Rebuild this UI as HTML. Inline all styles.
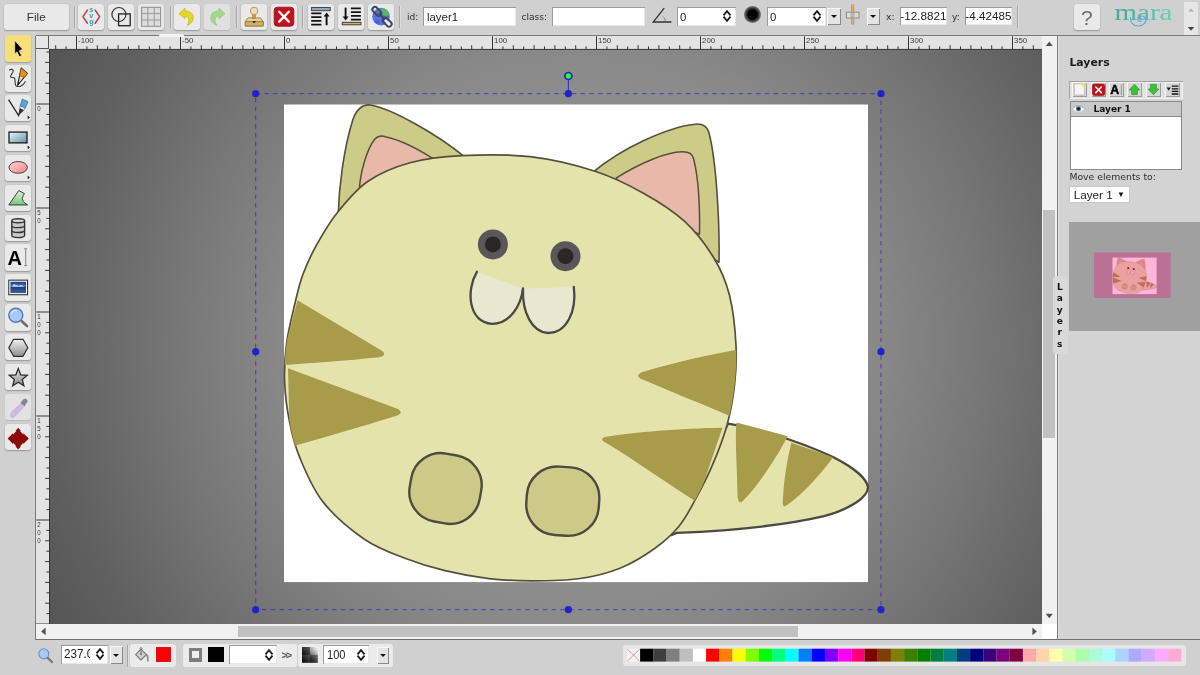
<!DOCTYPE html>
<html lang="en"><head><meta charset="utf-8"><title>mara - vector editor</title>
<style>
html,body{margin:0;padding:0}
body{will-change:transform;width:1200px;height:675px;overflow:hidden;background:#d0d0d0;position:relative;font-family:"Liberation Sans",sans-serif;color:#333}
.a{position:absolute}
.btn{position:absolute;background:#e9e9e9;border-radius:3px;box-shadow:0 1px 1.5px rgba(0,0,0,.28),0 0 0 .5px rgba(0,0,0,.04)}
.btn svg{position:absolute;left:0;top:0}
.sep{position:absolute;width:1px;background:#a8a8a8;box-shadow:1px 0 0 #dedede}
.lbl{position:absolute;font-family:"DejaVu Sans","Liberation Sans",sans-serif;font-size:9.1px;color:#2e2e2e;white-space:nowrap;line-height:12px}
.inp{position:absolute;background:#fff;box-shadow:inset 1px 1px 0 #9a9a9a, inset -1px -1px 0 #e8e8e8;overflow:hidden;font-size:11.4px;line-height:14px;color:#222;white-space:nowrap}
.inp span{position:absolute;top:3px}
.dd{position:absolute;background:#e4e4e4;box-shadow:inset 1px 1px 0 #f8f8f8, inset -1px -1px 0 #8a8a8a}
.dd:after{content:"";position:absolute;left:50%;top:50%;margin:-1.5px 0 0 -3.2px;border:3.2px solid transparent;border-top:3.6px solid #111;border-bottom:0}
svg{display:block}
</style></head><body>
<!-- top toolbar -->
<div class="btn" style="left:4px;top:4px;width:64.5px;height:26px;text-align:center;font-size:11.7px;line-height:26px;color:#333">File</div>
<div class="sep" style="left:73.5px;top:6px;height:22px"></div>
<div class="btn" style="left:78px;top:4px;width:26px;height:26px;"><svg width="26" height="26" viewBox="0 0 26 26"><path d="M9.4 6.1 L5 12.6 L9.4 19.2 M17.2 6.1 L21.6 12.6 L17.2 19.2" fill="none" stroke="#b8404f" stroke-width="1.6" stroke-linecap="round" stroke-linejoin="round"/><g font-family="Liberation Sans,sans-serif" font-weight="bold" font-size="7.4" fill="#35a6a6" text-anchor="middle"><text x="13.4" y="8.2">s</text><text x="13.4" y="14.1">v</text><text x="13.4" y="19.6">g</text></g></svg></div>
<div class="btn" style="left:108px;top:4px;width:26px;height:26px;"><svg width="26" height="26" viewBox="0 0 26 26"><circle cx="10.9" cy="10.5" r="7" fill="none" stroke="#333" stroke-width="1.2"/><rect x="10.6" y="9.9" width="11.6" height="11.8" fill="none" stroke="#222" stroke-width="1.3"/></svg></div>
<div class="btn" style="left:138px;top:4px;width:26px;height:26px;"><svg width="26" height="26" viewBox="0 0 26 26"><rect x="3.6" y="3.3" width="19" height="19" fill="#dcdcdc" stroke="#8e8e8e" stroke-width="1"/><path d="M9.9 3.3V22.3M16.3 3.3V22.3M3.6 9.6H22.6M3.6 16H22.6" stroke="#9a9a9a" stroke-width="1" fill="none"/></svg></div>
<div class="sep" style="left:169.5px;top:6px;height:22px"></div>
<div class="btn" style="left:174px;top:4px;width:26px;height:26px;"><svg width="26" height="26" viewBox="0 0 26 26"><path transform="translate(13 13.2) scale(.93) translate(-13 -13)" d="M4.4 9.2 L10.8 3.4 L10.8 6.3 C16.5 6.2 20.2 9.6 19.8 14 C19.5 17.5 17 20.4 13.2 21.8 C15.2 18.6 15.6 15.6 14.6 13.8 C13.8 12.4 12.4 12 10.8 12.1 L10.8 14.6 Z" fill="#e4d726" stroke="#c4b51a" stroke-width=".8" stroke-linejoin="round"/></svg></div>
<div class="btn" style="left:204px;top:4px;width:26px;height:26px;background:#e0e0e0;box-shadow:0 1px 1px rgba(0,0,0,.14)"><svg width="26" height="26" viewBox="0 0 26 26"><g opacity=".62"><path transform="translate(13 13.2) scale(.93) translate(-13 -13)" d="M21.6 9.2 L15.2 3.4 L15.2 6.3 C9.5 6.2 5.8 9.6 6.2 14 C6.5 17.5 9 20.4 12.8 21.8 C10.8 18.6 10.4 15.6 11.4 13.8 C12.2 12.4 13.6 12 15.2 12.1 L15.2 14.6 Z" fill="#7ed35f" stroke="#63bb47" stroke-width=".8" stroke-linejoin="round"/></g></svg></div>
<div class="sep" style="left:235.5px;top:6px;height:22px"></div>
<div class="btn" style="left:241px;top:4px;width:26px;height:26px;"><svg width="26" height="26" viewBox="0 0 26 26"><path d="M4.3 17.5 L7 13.9 H19.5 L22.2 17.5 V22 H4.3Z" fill="#e7cf98" stroke="#9b7b3e" stroke-width=".9" stroke-linejoin="round"/><path d="M4.3 17.5 H22.2 V22 H4.3Z" fill="#cfae66" stroke="#9b7b3e" stroke-width=".9"/><rect x="11.6" y="9.6" width="3" height="4.6" fill="#e0923a" stroke="#a86a25" stroke-width=".5"/><circle cx="13.1" cy="6.9" r="3.7" fill="#f0dcb0" stroke="#b0905a" stroke-width=".9"/><path d="M11.2 17.2 H15 L13.1 19.2Z" fill="#111"/></svg></div>
<div class="btn" style="left:271px;top:4px;width:26px;height:26px;"><svg width="26" height="26" viewBox="0 0 26 26"><rect x="3.2" y="3.2" width="19.6" height="19" rx="3.2" fill="#c4121c" stroke="#8e0a12" stroke-width=".8"/><path d="M8.2 7.8 L17.8 17.6 M17.8 7.8 L8.2 17.6" stroke="#fff" stroke-width="2.3" stroke-linecap="round"/></svg></div>
<div class="sep" style="left:302px;top:6px;height:22px"></div>
<div class="btn" style="left:308px;top:4px;width:26px;height:26px;"><svg width="26" height="26" viewBox="0 0 26 26"><rect x="3.6" y="3.5" width="18.6" height="3.2" fill="#8ea9b8" stroke="#2a3a44" stroke-width=".9"/><path d="M3.2 9.4H13.4M3.2 13.2H13.4M3.2 16.9H13.4M3.2 20.7H13.4" stroke="#111" stroke-width="1.8"/><path d="M18.6 21.2V11.5" stroke="#111" stroke-width="1.9"/><path d="M15.6 12.4 L18.6 8.4 L21.6 12.4Z" fill="#111"/></svg></div>
<div class="btn" style="left:337.5px;top:4px;width:26px;height:26px;"><svg width="26" height="26" viewBox="0 0 26 26"><rect x="4.3" y="18.3" width="18.6" height="2.5" fill="#c9b56e" stroke="#3a3320" stroke-width=".9"/><path d="M12.9 4.4H22.9M12.9 8.2H22.9M12.9 11.9H22.9M12.9 15.6H22.9" stroke="#111" stroke-width="1.8"/><path d="M7.6 3.6V13.4" stroke="#111" stroke-width="1.9"/><path d="M4.6 12.5 L7.6 16.6 L10.6 12.5Z" fill="#111"/></svg></div>
<div class="btn" style="left:367.5px;top:4px;width:26px;height:26px;"><svg width="26" height="26" viewBox="0 0 26 26"><circle cx="13" cy="12.6" r="8.8" fill="#5c6fe0"/><path d="M13 4.4 C17 3.6 21 6.5 21.6 10.6 C19.5 12.6 16 12.4 14.4 10.2 C13 8.4 12 6 13 4.4Z" fill="#59b85e"/><path d="M6 17 C8 15.5 11 16 12 18 C11 20 8 21 6 17Z" fill="#4a5ed0"/><g fill="none" stroke="#3c4a58" stroke-width="2"><rect x="-5.2" y="-2.6" width="10.4" height="5.2" rx="2.6" transform="translate(8.8 7.4) rotate(45)"/><rect x="-5.2" y="-2.6" width="10.4" height="5.2" rx="2.6" transform="translate(19.2 18.2) rotate(45)"/></g><path d="M11 9.6 L17 15.8" stroke="#3c4a58" stroke-width="2.2"/><rect x="-3.4" y="-1.2" width="6.8" height="2.4" rx="1.2" transform="translate(19.2 18.2) rotate(45)" fill="#e8e8f8"/></svg></div>
<div class="sep" style="left:399px;top:6px;height:22px"></div>
<div class="lbl" style="left:407px;top:11.3px">id:</div>
<div class="inp" style="left:422.5px;top:6.5px;width:93.5px;height:19px"><span style="left:4.5px">layer1</span></div>
<div class="lbl" style="left:521.5px;top:11.3px">class:</div>
<div class="inp" style="left:552px;top:6.5px;width:93px;height:19px"></div>
<svg class="a" style="left:651px;top:6px" width="22" height="18" viewBox="0 0 22 18"><path d="M13.2 2.2 L2.2 16 H20.4" fill="none" stroke="#333" stroke-width="1.3"/><path d="M12 10.4 C13.6 11.8 14.4 13.8 14.4 16" fill="none" stroke="#555" stroke-width=".6"/></svg>
<div class="inp" style="left:676.5px;top:6.5px;width:59px;height:19px"><span style="left:3.4px">0</span></div><svg class="a" style="left:722px;top:9px" width="10" height="14" viewBox="0 0 10 14"><path d="M1.5 6.3 L5 2.1 L8.5 6.3 M1.5 7.7 L5 11.9 L8.5 7.7" fill="none" stroke="#1c1c1c" stroke-width="1.8"/></svg>
<div class="a" style="left:744px;top:5.7px;width:17px;height:17px;border-radius:50%;background:radial-gradient(circle,#000 0,#000 38%,rgba(0,0,0,.55) 62%,rgba(0,0,0,0) 100%)"></div>
<div class="inp" style="left:766.5px;top:6.5px;width:59px;height:19px"><span style="left:3.4px">0</span></div><svg class="a" style="left:812px;top:9px" width="10" height="14" viewBox="0 0 10 14"><path d="M1.5 6.3 L5 2.1 L8.5 6.3 M1.5 7.7 L5 11.9 L8.5 7.7" fill="none" stroke="#1c1c1c" stroke-width="1.8"/></svg>
<div class="dd" style="left:827px;top:7.7px;width:13.5px;height:17px"></div>
<svg class="a" style="left:844px;top:3px" width="18" height="24" viewBox="0 0 18 24"><rect x="2.4" y="9.2" width="12.6" height="5.8" fill="#dcdcdc" stroke="#8a8a8a" stroke-width="1"/><path d="M7.7 1.2V21.8M9.5 1.2V21.8" stroke="#e8922e" stroke-width="1.3"/><rect x="6.4" y="10.8" width="4.2" height="2.6" fill="#b7b7b7"/></svg>
<div class="dd" style="left:867px;top:7.7px;width:13px;height:17px"></div>
<div class="lbl" style="left:886px;top:11.3px">x:</div>
<div class="inp" style="left:899.5px;top:6.5px;width:47px;height:18px"><span style="left:.8px;top:2.6px;font-size:11.7px">-12.8821</span></div>
<div class="lbl" style="left:952px;top:11.3px">y:</div>
<div class="inp" style="left:964.5px;top:6.5px;width:47px;height:18px"><span style="left:.8px;top:2.6px;font-size:11.7px">-4.42485</span></div>
<div class="sep" style="left:1017px;top:6px;height:22px"></div>
<div class="btn" style="left:1073.5px;top:3.5px;width:26.5px;height:26.5px;text-align:center;font-size:21px;line-height:27px;color:#6c6c6c">?</div>
<svg class="a" style="left:1108px;top:0" width="72" height="34" viewBox="0 0 72 34"><defs><linearGradient id="mg" x1="0" x2="1" y1="0" y2="0"><stop offset="0" stop-color="#49aa90"/><stop offset=".5" stop-color="#52b8ae"/><stop offset="1" stop-color="#66d6b4"/></linearGradient></defs><text x="6.5" y="20.2" font-family="Liberation Serif,serif" font-size="24" fill="url(#mg)" textLength="58" lengthAdjust="spacingAndGlyphs">mara</text><path d="M22.4 17.6 C22.6 22.6 25.4 26.2 30.6 26 C36 25.8 39.4 21.4 37.2 17.8 C35.4 15 30.2 15.6 29.8 18.8 C29.6 21 31.8 22 33.4 21" fill="none" stroke="#5aa9df" stroke-width="1.1" stroke-linecap="round"/></svg>
<div class="a" style="left:1183.5px;top:2px;width:14px;height:34px;background:#e6e6e6"></div>
<svg class="a" style="left:1183.5px;top:2px" width="14" height="34" viewBox="0 0 14 34"><path d="M4.2 9.6 L7 6.4 L9.8 9.6Z" fill="#b0b0b0"/><path d="M3.8 25 L7 28.8 L10.2 25Z" fill="#444"/></svg>
<!-- left tools -->
<div class="btn" style="left:4.6px;top:35.4px;width:26.6px;height:26.3px;background:#f6df7a;box-shadow:0 1px 1.5px rgba(0,0,0,.25)"><svg width="26.6" height="26.3" viewBox="0 0 26.6 26.3"><g transform="translate(0 0.1)"><path d="M9.8 5.6 L9.8 18.6 L12.1 16.7 L14.3 21.5 L16.5 20.5 L14.2 15.8 L17.5 14.1 Z" fill="#000" stroke="#fdf6d0" stroke-width=".5"/></g></svg></div>
<div class="btn" style="left:4.6px;top:65.27px;width:26.6px;height:26.3px;"><svg width="26.6" height="26.3" viewBox="0 0 26.6 26.3"><g transform="translate(0 0.23)"><path d="M4.6 4.8 C6 3.6 8 4 8.2 5.4 C8.4 7.4 5 10.4 5.6 11.8 C6.2 13 8.4 11.6 9.4 12.6 C11 14.4 9 18.6 11.2 20.6 C13.4 22.4 18.4 20.6 20.2 16.4" fill="none" stroke="#333" stroke-width="1.1" stroke-linecap="round"/><path d="M12.6 20 L16.2 2.8 L22.4 8.2 Z" fill="#f6e3b4" stroke="#222" stroke-width="1.1" stroke-linejoin="round"/><path d="M16.2 2.8 L22.4 8.2 L19.4 12.2 L14.6 10.4Z" fill="#e8901c" stroke="#7a4a10" stroke-width=".6"/><path d="M12.6 20 L13.3 16.6 L15 18 Z" fill="#111"/></g></svg></div>
<div class="btn" style="left:4.6px;top:95.14px;width:26.6px;height:26.3px;"><svg width="26.6" height="26.3" viewBox="0 0 26.6 26.3"><g transform="translate(0 0.36)"><path d="M3.6 4.2 L13.6 20.2 L17 9" fill="none" stroke="#222" stroke-width="1.3" stroke-linejoin="miter"/><path d="M17.4 3.6 L23 6.4 L20.2 13 L15.2 10.6Z" fill="#5aa6d6" stroke="#2a6a9a" stroke-width=".7"/><path d="M15.2 10.6 L20.2 13 L19 15 L14.6 12.8Z" fill="#f4f4f4" stroke="#555" stroke-width=".5"/><path d="M14.6 12.8 L19 15 L13.8 20 Z" fill="#333"/></g><path d="M22.7 20.6 L25 22.4 L22.7 24.2Z" fill="#222"/></svg></div>
<div class="btn" style="left:4.6px;top:125.01px;width:26.6px;height:26.3px;"><svg width="26.6" height="26.3" viewBox="0 0 26.6 26.3"><g transform="translate(0 0.49)"><defs><linearGradient id="gr" x1="0" y1="0" x2="1" y2="1"><stop offset="0" stop-color="#eef5f8"/><stop offset="1" stop-color="#5f93ab"/></linearGradient></defs><rect x="4" y="6.6" width="18" height="10.8" fill="url(#gr)" stroke="#1a1a1a" stroke-width="1.3"/></g><path d="M22.7 20.6 L25 22.4 L22.7 24.2Z" fill="#222"/></svg></div>
<div class="btn" style="left:4.6px;top:154.88px;width:26.6px;height:26.3px;"><svg width="26.6" height="26.3" viewBox="0 0 26.6 26.3"><g transform="translate(0 0.62)"><defs><linearGradient id="ge" x1="0" y1="0" x2="1" y2="1"><stop offset="0" stop-color="#ffd6d6"/><stop offset="1" stop-color="#f57f86"/></linearGradient></defs><ellipse cx="13.2" cy="11.8" rx="9.2" ry="5.9" fill="url(#ge)" stroke="#4a3a3a" stroke-width="1"/></g><path d="M22.7 20.6 L25 22.4 L22.7 24.2Z" fill="#222"/></svg></div>
<div class="btn" style="left:4.6px;top:184.75px;width:26.6px;height:26.3px;"><svg width="26.6" height="26.3" viewBox="0 0 26.6 26.3"><g transform="translate(0 0.75)"><defs><linearGradient id="gp" x1="0" y1="0" x2="0" y2="1"><stop offset="0" stop-color="#dff0df"/><stop offset="1" stop-color="#72c878"/></linearGradient></defs><path d="M3.8 19.2 L13.8 4.8 L19.4 7.8 C17.6 10.6 17 12.6 17.6 14.2 C18.4 16.2 20.4 17.8 22.6 19.2 Z" fill="url(#gp)" stroke="#3c3c3c" stroke-width="1" stroke-linejoin="round"/></g></svg></div>
<div class="btn" style="left:4.6px;top:214.62px;width:26.6px;height:26.3px;"><svg width="26.6" height="26.3" viewBox="0 0 26.6 26.3"><g transform="translate(0 0.88)"><path d="M6.8 4.8 V19.6 C6.8 22.4 19.6 22.4 19.6 19.6 V4.8" fill="#c9c9c9" stroke="#333" stroke-width="1.4"/><ellipse cx="13.2" cy="4.8" rx="6.4" ry="2" fill="#d4d4d4" stroke="#333" stroke-width="1.4"/><path d="M6.8 9.8 C6.8 12.4 19.6 12.4 19.6 9.8 M6.8 14.7 C6.8 17.3 19.6 17.3 19.6 14.7" fill="none" stroke="#333" stroke-width="1.4"/></g></svg></div>
<div class="btn" style="left:4.6px;top:244.49px;width:26.6px;height:26.3px;"><svg width="26.6" height="26.3" viewBox="0 0 26.6 26.3"><g transform="translate(0 1.01)"><text x="2.6" y="19.8" font-family="Liberation Sans,sans-serif" font-weight="bold" font-size="20" fill="#000">A</text><path d="M20.7 3.8V20.6M19.2 3.8H22.2M19.2 20.6H22.2" stroke="#888" stroke-width="1" fill="none"/></g></svg></div>
<div class="btn" style="left:4.6px;top:274.36px;width:26.6px;height:26.3px;"><svg width="26.6" height="26.3" viewBox="0 0 26.6 26.3"><g transform="translate(0 1.14)"><defs><linearGradient id="gi" x1="0" y1="0" x2="0" y2="1"><stop offset="0" stop-color="#1c3f86"/><stop offset=".45" stop-color="#4a78c4"/><stop offset=".5" stop-color="#22407e"/><stop offset="1" stop-color="#3d5f9e"/></linearGradient></defs><rect x="3.8" y="5" width="18.8" height="14.6" fill="#fff" stroke="#222" stroke-width="1"/><rect x="5.4" y="6.6" width="15.6" height="11.4" fill="url(#gi)"/><path d="M7.4 10.6 C8 8.6 10.2 8.6 10.8 10 C12 9.4 13.2 10 13.4 11 C15 9.6 17 9.6 18.4 10.8 L18.4 11.6 L7.4 11.6Z" fill="#cfe0f6" opacity=".9"/></g></svg></div>
<div class="btn" style="left:4.6px;top:304.23px;width:26.6px;height:26.3px;"><svg width="26.6" height="26.3" viewBox="0 0 26.6 26.3"><g transform="translate(0 1.27)"><path d="M16.6 15.8 L22 20.8" stroke="#6e6e6e" stroke-width="2.6" stroke-linecap="round"/><circle cx="10.8" cy="10" r="7" fill="#a9c9fb" stroke="#5578bd" stroke-width="1.4"/><path d="M6.2 9 C6.6 6.4 9 4.8 11.4 5.2" fill="none" stroke="#d6e6ff" stroke-width="1.2" stroke-linecap="round"/></g></svg></div>
<div class="btn" style="left:4.6px;top:334.1px;width:26.6px;height:26.3px;"><svg width="26.6" height="26.3" viewBox="0 0 26.6 26.3"><g transform="translate(0 1.4)"><defs><linearGradient id="gh" x1="0" y1="0" x2="0" y2="1"><stop offset="0" stop-color="#f2f2f2"/><stop offset="1" stop-color="#8f8f8f"/></linearGradient></defs><path d="M3.8 12.4 L8.6 3.9 L18 3.9 L22.8 12.4 L18 20.9 L8.6 20.9Z" fill="url(#gh)" stroke="#2c2c2c" stroke-width="1.2" stroke-linejoin="round"/></g></svg></div>
<div class="btn" style="left:4.6px;top:363.97px;width:26.6px;height:26.3px;"><svg width="26.6" height="26.3" viewBox="0 0 26.6 26.3"><g transform="translate(0 1.53)"><defs><linearGradient id="gs" x1="0" y1="0" x2="0" y2="1"><stop offset="0" stop-color="#e6e6e6"/><stop offset="1" stop-color="#8a8a8a"/></linearGradient></defs><path d="M13.3 3.1 L15.7 9.3 L22.3 9.7 L17.2 13.9 L18.9 20.3 L13.3 16.7 L7.7 20.3 L9.4 13.9 L4.3 9.7 L10.9 9.3Z" fill="url(#gs)" stroke="#2c2c2c" stroke-width="1.3" stroke-linejoin="miter"/></g></svg></div>
<div class="btn" style="left:4.6px;top:393.84px;width:26.6px;height:26.3px;background:#e2e2e2;box-shadow:0 1px 1px rgba(0,0,0,.12)"><svg width="26.6" height="26.3" viewBox="0 0 26.6 26.3"><g transform="translate(0 1.66)"><g opacity=".8"><path d="M5.6 20.4 C5 17.6 8 14 17 7.4 L19.6 10 C13 17.6 10 21.4 7.4 22 C6.4 22.2 5.8 21.4 5.6 20.4Z" fill="#c6b2e2" stroke="#b29ad2" stroke-width=".6"/><path d="M15.4 7.4 L18 4 C19.4 2.6 21.6 3 22.4 4.6 C23 6 22.2 7.2 21 8 L19.8 10.6Z" fill="#6c6c78"/></g></g></svg></div>
<div class="btn" style="left:4.6px;top:423.71px;width:26.6px;height:26.3px;"><svg width="26.6" height="26.3" viewBox="0 0 26.6 26.3"><g transform="translate(0 1.79)"><path d="M13.2 2 L16 5.2 H15 L18.4 8.6 V7.4 L23.8 12.8 L18.4 18.2 V17 L15 20.4 H16 L13.2 23.6 L10.4 20.4 H11.4 L8 17 V18.2 L2.6 12.8 L8 7.4 V8.6 L11.4 5.2 H10.4Z" fill="#8c0a0a"/></g></svg></div>
<!-- rulers -->
<div class="a" style="left:35.5px;top:35.3px;width:1164.5px;height:1px;background:#7a7a7a"></div>
<div class="a" style="left:35.3px;top:35.5px;width:1px;height:604px;background:#7a7a7a"></div>
<div class="a" style="left:36.3px;top:36.3px;width:13.4px;height:587.5px;background:#e3e3e3"></div>
<div class="a" style="left:36.3px;top:36.3px;width:1005.6px;height:13.2px;background:#e3e3e3"></div>
<div class="a" style="left:36.3px;top:36.3px;width:13px;height:12.6px;background:#e6e6e6;border-right:1px solid #555;border-bottom:1px solid #555;box-sizing:border-box"></div>
<svg class="a" style="left:0;top:0" width="1060" height="640" viewBox="0 0 1060 640"><path d="M55.70 45.2V49.5 M66.10 46.4V49.5 M76.50 36.3V49.5 M86.90 46.4V49.5 M97.30 45.2V49.5 M107.70 46.4V49.5 M118.10 45.2V49.5 M128.50 46.4V49.5 M138.90 45.2V49.5 M149.30 46.4V49.5 M159.70 45.2V49.5 M170.10 46.4V49.5 M180.50 36.3V49.5 M190.90 46.4V49.5 M201.30 45.2V49.5 M211.70 46.4V49.5 M222.10 45.2V49.5 M232.50 46.4V49.5 M242.90 45.2V49.5 M253.30 46.4V49.5 M263.70 45.2V49.5 M274.10 46.4V49.5 M284.50 36.3V49.5 M294.90 46.4V49.5 M305.30 45.2V49.5 M315.70 46.4V49.5 M326.10 45.2V49.5 M336.50 46.4V49.5 M346.90 45.2V49.5 M357.30 46.4V49.5 M367.70 45.2V49.5 M378.10 46.4V49.5 M388.50 36.3V49.5 M398.90 46.4V49.5 M409.30 45.2V49.5 M419.70 46.4V49.5 M430.10 45.2V49.5 M440.50 46.4V49.5 M450.90 45.2V49.5 M461.30 46.4V49.5 M471.70 45.2V49.5 M482.10 46.4V49.5 M492.50 36.3V49.5 M502.90 46.4V49.5 M513.30 45.2V49.5 M523.70 46.4V49.5 M534.10 45.2V49.5 M544.50 46.4V49.5 M554.90 45.2V49.5 M565.30 46.4V49.5 M575.70 45.2V49.5 M586.10 46.4V49.5 M596.50 36.3V49.5 M606.90 46.4V49.5 M617.30 45.2V49.5 M627.70 46.4V49.5 M638.10 45.2V49.5 M648.50 46.4V49.5 M658.90 45.2V49.5 M669.30 46.4V49.5 M679.70 45.2V49.5 M690.10 46.4V49.5 M700.50 36.3V49.5 M710.90 46.4V49.5 M721.30 45.2V49.5 M731.70 46.4V49.5 M742.10 45.2V49.5 M752.50 46.4V49.5 M762.90 45.2V49.5 M773.30 46.4V49.5 M783.70 45.2V49.5 M794.10 46.4V49.5 M804.50 36.3V49.5 M814.90 46.4V49.5 M825.30 45.2V49.5 M835.70 46.4V49.5 M846.10 45.2V49.5 M856.50 46.4V49.5 M866.90 45.2V49.5 M877.30 46.4V49.5 M887.70 45.2V49.5 M898.10 46.4V49.5 M908.50 36.3V49.5 M918.90 46.4V49.5 M929.30 45.2V49.5 M939.70 46.4V49.5 M950.10 45.2V49.5 M960.50 46.4V49.5 M970.90 45.2V49.5 M981.30 46.4V49.5 M991.70 45.2V49.5 M1002.10 46.4V49.5 M1012.50 36.3V49.5 M1022.90 46.4V49.5 M1033.30 45.2V49.5 M46.4 52.00H49.6 M45.2 62.40H49.6 M46.4 72.80H49.6 M45.2 83.20H49.6 M46.4 93.60H49.6 M36.3 104.00H49.6 M46.4 114.40H49.6 M45.2 124.80H49.6 M46.4 135.20H49.6 M45.2 145.60H49.6 M46.4 156.00H49.6 M45.2 166.40H49.6 M46.4 176.80H49.6 M45.2 187.20H49.6 M46.4 197.60H49.6 M36.3 208.00H49.6 M46.4 218.40H49.6 M45.2 228.80H49.6 M46.4 239.20H49.6 M45.2 249.60H49.6 M46.4 260.00H49.6 M45.2 270.40H49.6 M46.4 280.80H49.6 M45.2 291.20H49.6 M46.4 301.60H49.6 M36.3 312.00H49.6 M46.4 322.40H49.6 M45.2 332.80H49.6 M46.4 343.20H49.6 M45.2 353.60H49.6 M46.4 364.00H49.6 M45.2 374.40H49.6 M46.4 384.80H49.6 M45.2 395.20H49.6 M46.4 405.60H49.6 M36.3 416.00H49.6 M46.4 426.40H49.6 M45.2 436.80H49.6 M46.4 447.20H49.6 M45.2 457.60H49.6 M46.4 468.00H49.6 M45.2 478.40H49.6 M46.4 488.80H49.6 M45.2 499.20H49.6 M46.4 509.60H49.6 M36.3 520.00H49.6 M46.4 530.40H49.6 M45.2 540.80H49.6 M46.4 551.20H49.6 M45.2 561.60H49.6 M46.4 572.00H49.6 M45.2 582.40H49.6 M46.4 592.80H49.6 M45.2 603.20H49.6 M46.4 613.60H49.6" stroke="#222" stroke-width=".9" fill="none"/><path d="M49.2 49.4H1041.9M49.5 49V624.4M36 624H50" stroke="#333" stroke-width="1" fill="none"/><g font-family="Liberation Sans,sans-serif" font-size="7.8" fill="#3a3a3a"><text x="78.1" y="42.7">-100</text><text x="182.1" y="42.7">-50</text><text x="286.1" y="42.7">0</text><text x="390.1" y="42.7">50</text><text x="494.1" y="42.7">100</text><text x="598.1" y="42.7">150</text><text x="702.1" y="42.7">200</text><text x="806.1" y="42.7">250</text><text x="910.1" y="42.7">300</text><text x="1014.1" y="42.7">350</text><text x="37.3" y="111.1" textLength="3.4" lengthAdjust="spacingAndGlyphs">0</text><text x="37.3" y="215.1" textLength="3.4" lengthAdjust="spacingAndGlyphs">5</text><text x="37.3" y="223.0" textLength="3.4" lengthAdjust="spacingAndGlyphs">0</text><text x="37.3" y="319.1" textLength="3.4" lengthAdjust="spacingAndGlyphs">1</text><text x="37.3" y="327.0" textLength="3.4" lengthAdjust="spacingAndGlyphs">0</text><text x="37.3" y="334.9" textLength="3.4" lengthAdjust="spacingAndGlyphs">0</text><text x="37.3" y="423.1" textLength="3.4" lengthAdjust="spacingAndGlyphs">1</text><text x="37.3" y="431.0" textLength="3.4" lengthAdjust="spacingAndGlyphs">5</text><text x="37.3" y="438.9" textLength="3.4" lengthAdjust="spacingAndGlyphs">0</text><text x="37.3" y="527.1" textLength="3.4" lengthAdjust="spacingAndGlyphs">2</text><text x="37.3" y="535.0" textLength="3.4" lengthAdjust="spacingAndGlyphs">0</text><text x="37.3" y="542.9" textLength="3.4" lengthAdjust="spacingAndGlyphs">0</text></g></svg>
<div class="a" style="left:159px;top:33.6px;width:25px;height:3px;background:#f4f4f4;border-radius:2px 2px 0 0"></div>
<!-- workarea -->
<div class="a" style="left:50px;top:49.8px;width:992px;height:574px;overflow:hidden;background:radial-gradient(circle 600px at 530px 293px,#949494 0%,#8c8c8c 43%,#888888 50%,#767676 68%,#606060 88%,#555555 100%)"><svg width="992" height="574" viewBox="50 49.8 992 574"><rect x="284" y="104.3" width="584" height="477.6" fill="#fff"/>
<g stroke-linejoin="round" stroke-linecap="round">
<!-- tail -->
<path d="M728 423.5 C750 427 790 437 833.5 457 C855 468 867 479 868 487 C868 497 850 509 824 516 C790 524 740 530 677 532.7 L671 535 Z" fill="#e3e3ab" stroke="#4b4a42" stroke-width="2.3"/>
<path d="M736.4 422.3 L787.8 436 C775 460 755 490 741.5 502 C738 503 737.5 498 737.5 492 C737 470 735 440 736.4 422.3Z" fill="#a89b49"/>
<path d="M791.4 442.5 L833 457 C820 475 800 497 785 506 C782.5 506.5 782.5 503 783 498 C784 480 787 460 791.4 442.5Z" fill="#a89b49"/>
<!-- ears -->
<path d="M338.3 213 C339 190 343 150 353 119 C357 108 364 104 371 104.8 C391 108.5 436 133 465 157 L400 200 Z" fill="#cccb88" stroke="#55503c" stroke-width="1.6"/>
<path d="M359.4 189 C360 175 366 150 374.7 139 C377.5 136 381 135 385.5 136.5 C399 139.5 419 149 437 161 L380 200 Z" fill="#e8b9a8" stroke="#55503c" stroke-width="1.5"/>
<path d="M593 172 C622 148 667 127 695 124 C702.5 123.2 707 126 708.8 132 C716 158 719.8 220 719 262 L650 220 Z" fill="#cccb88" stroke="#55503c" stroke-width="1.6"/>
<path d="M616 178 C642 161.5 667 152 682 151.6 C689 151.4 692.5 154 693.6 158.5 C698.5 178 700 205 699.5 234 L650 215 Z" fill="#e8b9a8" stroke="#55503c" stroke-width="1.5"/>
<!-- body -->
<path d="M462.0 155.4 C482.0 154.4 507.8 153.9 530.0 156.5 C552.2 159.1 576.2 165.0 595.0 171.0 C613.8 177.0 628.1 184.4 643.0 192.7 C657.9 201.0 672.6 210.1 684.4 221.0 C696.2 231.9 706.5 245.7 714.0 258.0 C721.5 270.3 725.8 280.5 729.5 295.0 C733.2 309.5 735.2 330.0 736.0 345.0 C736.8 360.0 736.0 371.7 734.5 385.0 C733.0 398.3 730.7 411.7 727.0 425.0 C723.3 438.3 717.6 452.7 712.4 465.0 C707.1 477.3 701.1 488.8 695.5 499.0 C689.9 509.2 685.8 517.8 679.0 526.0 C672.2 534.2 664.8 541.0 655.0 548.0 C645.2 555.0 632.5 563.0 620.0 568.0 C607.5 573.0 594.7 576.2 580.0 578.3 C565.3 580.4 547.2 580.6 532.0 580.6 C516.8 580.6 503.3 580.1 488.8 578.4 C474.3 576.7 459.0 573.9 445.0 570.5 C431.0 567.1 418.4 563.2 405.0 558.0 C391.6 552.8 378.1 548.4 364.4 539.0 C350.7 529.6 333.7 515.2 323.0 501.7 C312.3 488.2 305.5 471.1 300.0 458.0 C294.5 444.9 292.4 435.8 289.8 423.0 C287.2 410.2 285.1 394.8 284.6 381.5 C284.1 368.2 284.9 356.1 286.6 343.0 C288.3 329.9 292.3 314.5 295.0 303.0 C297.7 291.5 299.3 283.8 303.0 274.0 C306.7 264.2 311.2 254.4 317.0 244.0 C322.8 233.6 329.5 222.0 338.0 211.5 C346.5 201.0 356.0 189.2 368.0 181.0 C380.0 172.8 394.3 166.8 410.0 162.5 C425.7 158.2 442.0 156.4 462.0 155.4Z" fill="#e3e3ab" stroke="#55503c" stroke-width="1.7"/>
<clipPath id="bodyclip"><path d="M462.0 155.4 C482.0 154.4 507.8 153.9 530.0 156.5 C552.2 159.1 576.2 165.0 595.0 171.0 C613.8 177.0 628.1 184.4 643.0 192.7 C657.9 201.0 672.6 210.1 684.4 221.0 C696.2 231.9 706.5 245.7 714.0 258.0 C721.5 270.3 725.8 280.5 729.5 295.0 C733.2 309.5 735.2 330.0 736.0 345.0 C736.8 360.0 736.0 371.7 734.5 385.0 C733.0 398.3 730.7 411.7 727.0 425.0 C723.3 438.3 717.6 452.7 712.4 465.0 C707.1 477.3 701.1 488.8 695.5 499.0 C689.9 509.2 685.8 517.8 679.0 526.0 C672.2 534.2 664.8 541.0 655.0 548.0 C645.2 555.0 632.5 563.0 620.0 568.0 C607.5 573.0 594.7 576.2 580.0 578.3 C565.3 580.4 547.2 580.6 532.0 580.6 C516.8 580.6 503.3 580.1 488.8 578.4 C474.3 576.7 459.0 573.9 445.0 570.5 C431.0 567.1 418.4 563.2 405.0 558.0 C391.6 552.8 378.1 548.4 364.4 539.0 C350.7 529.6 333.7 515.2 323.0 501.7 C312.3 488.2 305.5 471.1 300.0 458.0 C294.5 444.9 292.4 435.8 289.8 423.0 C287.2 410.2 285.1 394.8 284.6 381.5 C284.1 368.2 284.9 356.1 286.6 343.0 C288.3 329.9 292.3 314.5 295.0 303.0 C297.7 291.5 299.3 283.8 303.0 274.0 C306.7 264.2 311.2 254.4 317.0 244.0 C322.8 233.6 329.5 222.0 338.0 211.5 C346.5 201.0 356.0 189.2 368.0 181.0 C380.0 172.8 394.3 166.8 410.0 162.5 C425.7 158.2 442.0 156.4 462.0 155.4Z"/></clipPath>
<g clip-path="url(#bodyclip)" fill="#a89b49">
<path d="M297.5 300 L381 350 C386 353 385 356 379 357 C350 360 310 363 280 365 Z"/>
<path d="M288 368 L396 408 C403 411 402 414 395 416 C360 427 320 438 290 447 Z"/>
<path d="M740 349 C700 356 665 365 642 372 C637 374 637 377 642 379 C670 391 705 405 735 418 Z"/>
<path d="M722.5 427.5 C680 428 635 432 606 436.5 C601 437.5 601 440 605 442 C635 460 670 485 697 502 Z"/>
</g>
<!-- paws -->
<rect x="-35.5" y="-34.5" width="71" height="69" rx="30" ry="30" transform="translate(445.5 488.3) rotate(10)" fill="#cdca87" stroke="#4d4b42" stroke-width="2.4"/>
<rect x="-36.3" y="-34.3" width="72.6" height="68.6" rx="30.5" ry="30.5" transform="translate(562.8 501) rotate(4)" fill="#cdca87" stroke="#4d4b42" stroke-width="2.4"/>
<!-- eyes -->
<circle cx="492.9" cy="244.2" r="15" fill="#5b5659"/>
<circle cx="492.9" cy="244.2" r="8" fill="#2b2729"/>
<circle cx="565.5" cy="256" r="15" fill="#5b5659"/>
<circle cx="565.5" cy="256" r="8" fill="#2b2729"/>
<!-- mouth -->
<path d="M476.9 271.6 C466 290 468 322 492 323.6 C510 324 521 305 523 288.4" fill="#e9e7cf" stroke="#4b4a42" stroke-width="2.3"/>
<path d="M523 288.4 C522 312 532 332 548 332.8 C566 333 577 312 573.8 286.7" fill="#e9e7cf" stroke="#4b4a42" stroke-width="2.3"/>
</g>
<rect x="255.7" y="93.5" width="625.3" height="516.0" fill="none" stroke="#2222cc" stroke-opacity=".8" stroke-width=".88" stroke-dasharray="4.39 4.39"/><path d="M568.35 93.5V76" stroke="#2222cc" stroke-width=".9"/><circle cx="568.35" cy="75.8" r="3.5" fill="#22ff33" stroke="#2222cc" stroke-width="1.7"/><circle cx="255.7" cy="93.5" r="3.6" fill="#2222cc"/><circle cx="568.35" cy="93.5" r="3.6" fill="#2222cc"/><circle cx="881" cy="93.5" r="3.6" fill="#2222cc"/><circle cx="255.7" cy="351.5" r="3.6" fill="#2222cc"/><circle cx="881" cy="351.5" r="3.6" fill="#2222cc"/><circle cx="255.7" cy="609.5" r="3.6" fill="#2222cc"/><circle cx="568.35" cy="609.5" r="3.6" fill="#2222cc"/><circle cx="881" cy="609.5" r="3.6" fill="#2222cc"/></svg></div>
<div class="a" style="left:1042px;top:36px;width:14.8px;height:588px;background:#f1f1f1"></div>
<div class="a" style="left:1043.2px;top:210px;width:12px;height:228.4px;background:#c1c1c1"></div>
<div class="a" style="left:36px;top:623.8px;width:1006px;height:15.2px;background:#f1f1f1"></div>
<div class="a" style="left:238px;top:625.6px;width:559.7px;height:11.6px;background:#c1c1c1"></div>
<div class="a" style="left:1042px;top:623.8px;width:14.8px;height:15.2px;background:#fff"></div>
<svg class="a" style="left:0;top:0" width="1060" height="640" viewBox="0 0 1060 640"><path d="M1045.8 46 L1049.3 41.6 L1052.8 46Z M1045.8 613.8 L1049.3 618.2 L1052.8 613.8Z M45.6 627.6 L41.2 631.4 L45.6 635.2Z M1032.4 627.6 L1036.8 631.4 L1032.4 635.2Z" fill="#505050"/></svg>
<div class="a" style="left:1056.8px;top:36px;width:1px;height:603.5px;background:#808080"></div>
<div class="a" style="left:1057.8px;top:36px;width:1px;height:603px;background:#dedede"></div>
<div class="a" style="left:35.5px;top:638.8px;width:1164.5px;height:1px;background:#707070"></div>
<!-- side panel -->
<div class="a" style="left:1058.8px;top:36.3px;width:141.2px;height:602.5px;background:#d3d3d3"></div>
<div class="a" style="left:1069.4px;top:56.1px;font-family:'DejaVu Sans','Liberation Sans',sans-serif;font-weight:bold;font-size:10.9px;line-height:14px;color:#1a1a1a">Layers</div>
<div class="a" style="left:1069.3px;top:81.3px;width:114px;height:18px;background:#e2e2e2;box-shadow:inset 1px 1px 0 #a2a2a2, inset -1px -1px 0 #f2f2f2"></div>
<div class="a" style="left:1072.4px;top:82.4px;width:15px;height:15px;background:#d6d6d6;box-shadow:inset 1px 1px 0 #f6f6f6, inset -1px -1px 0 #9c9c9c"><svg width="15" height="15" viewBox="0 0 15 15"><path d="M2.4 1.8 H12.4 V13 H2.4Z" fill="#f4f4fa" stroke="#aaa" stroke-width=".6"/><path d="M7.6 1.8 H12.4 V6.6Z" fill="#f2ee5a"/><path d="M7.6 1.8 L12.4 6.6 H7.6Z" fill="#f8f8c8"/></svg></div>
<div class="a" style="left:1090.8px;top:82.4px;width:15px;height:15px;background:#d6d6d6;box-shadow:inset 1px 1px 0 #f6f6f6, inset -1px -1px 0 #9c9c9c"><svg width="15" height="15" viewBox="0 0 15 15"><rect x="1.4" y="2" width="12.4" height="11.4" rx="2" fill="#c4121c" stroke="#8e0a12" stroke-width=".6"/><path d="M4.8 5 L10.4 10.6 M10.4 5 L4.8 10.6" stroke="#fff" stroke-width="1.5" stroke-linecap="round"/></svg></div>
<div class="a" style="left:1109.2px;top:82.4px;width:15px;height:15px;background:#d6d6d6;box-shadow:inset 1px 1px 0 #f6f6f6, inset -1px -1px 0 #9c9c9c"><svg width="15" height="15" viewBox="0 0 15 15"><text x="1.2" y="12.4" font-family="Liberation Sans,sans-serif" font-weight="bold" font-size="12.4" fill="#000" stroke="#000" stroke-width=".45">A</text><path d="M12.4 2.6V13" stroke="#999" stroke-width="1"/></svg></div>
<div class="a" style="left:1127.4px;top:82.4px;width:15px;height:15px;background:#d6d6d6;box-shadow:inset 1px 1px 0 #f6f6f6, inset -1px -1px 0 #9c9c9c"><svg width="15" height="15" viewBox="0 0 15 15"><path d="M7.5 2.2 L12.8 8 H10.4 V12.6 H4.6 V8 H2.2Z" fill="#3fc03a" stroke="#2e9a2a" stroke-width=".7" stroke-linejoin="round"/></svg></div>
<div class="a" style="left:1145.8px;top:82.4px;width:15px;height:15px;background:#d6d6d6;box-shadow:inset 1px 1px 0 #f6f6f6, inset -1px -1px 0 #9c9c9c"><svg width="15" height="15" viewBox="0 0 15 15"><path d="M7.5 12.8 L12.8 7 H10.4 V2.4 H4.6 V7 H2.2Z" fill="#3fc03a" stroke="#2e9a2a" stroke-width=".7" stroke-linejoin="round"/></svg></div>
<div class="a" style="left:1164.6px;top:82.4px;width:15px;height:15px;background:#d6d6d6;box-shadow:inset 1px 1px 0 #f6f6f6, inset -1px -1px 0 #9c9c9c"><svg width="15" height="15" viewBox="0 0 15 15"><path d="M1.6 5.6 H5.8 L3.7 8.4Z" fill="#111"/><path d="M6.8 4.2H13.4M6.8 6.8H13.4M6.8 9.4H13.4M6.8 12H13.4" stroke="#111" stroke-width="1.3"/></svg></div>
<div class="a" style="left:1070.3px;top:101.2px;width:111.8px;height:68.6px;background:#fff;box-sizing:border-box;border:1px solid #8a8a8a"></div>
<div class="a" style="left:1071.3px;top:102.2px;width:109.8px;height:14px;background:#c9c9c9;border-bottom:1px solid #8a8a8a;font-family:'DejaVu Sans','Liberation Sans',sans-serif;font-weight:bold;font-size:9px;line-height:14px;color:#111"><span class="a" style="left:22.2px;top:-.4px">Layer 1</span></div>
<svg class="a" style="left:1072px;top:104px" width="13" height="10" viewBox="0 0 13 10"><path d="M.7 5 C3.2 .6 9.8 .6 12.3 5 C9.8 8.8 3.2 8.8 .7 5Z" fill="#fbfbfb" stroke="#c9ced4" stroke-width=".7"/><path d="M.9 4.6 C3.4 .8 9.6 .8 12.1 4.6" fill="none" stroke="#8b8f96" stroke-width=".7"/><circle cx="6.5" cy="4.7" r="2.5" fill="#50708e"/><circle cx="6.5" cy="4.7" r="1.3" fill="#0c0c0c"/></svg>
<div class="lbl" style="left:1069.4px;top:171.2px;font-size:9.3px">Move elements to:</div>
<div class="a" style="left:1069.5px;top:187px;width:59.7px;height:15.4px;background:#fff;box-shadow:0 0 0 .5px #bbb;font-size:11.7px;line-height:15.4px;color:#222"><span class="a" style="left:4.2px;top:0">Layer 1</span><span class="a" style="left:47.4px;top:-.4px;font-size:8px;color:#111">&#9660;</span></div>
<div class="a" style="left:1069.3px;top:221.6px;width:131px;height:109.3px;background:#a0a0a0;overflow:hidden"><svg width="131" height="109" viewBox="1069.3 221.6 131 109"><rect x="1112.8" y="257.2" width="44.1" height="36.5" fill="#fff"/><g transform="translate(1091.35 249.32) scale(0.07551)">
<g stroke-linejoin="round" stroke-linecap="round">
<!-- tail -->
<path d="M728 423.5 C750 427 790 437 833.5 457 C855 468 867 479 868 487 C868 497 850 509 824 516 C790 524 740 530 677 532.7 L671 535 Z" fill="#e3e3ab" stroke="#4b4a42" stroke-width="2.3"/>
<path d="M736.4 422.3 L787.8 436 C775 460 755 490 741.5 502 C738 503 737.5 498 737.5 492 C737 470 735 440 736.4 422.3Z" fill="#a89b49"/>
<path d="M791.4 442.5 L833 457 C820 475 800 497 785 506 C782.5 506.5 782.5 503 783 498 C784 480 787 460 791.4 442.5Z" fill="#a89b49"/>
<!-- ears -->
<path d="M338.3 213 C339 190 343 150 353 119 C357 108 364 104 371 104.8 C391 108.5 436 133 465 157 L400 200 Z" fill="#cccb88" stroke="#55503c" stroke-width="1.6"/>
<path d="M359.4 189 C360 175 366 150 374.7 139 C377.5 136 381 135 385.5 136.5 C399 139.5 419 149 437 161 L380 200 Z" fill="#e8b9a8" stroke="#55503c" stroke-width="1.5"/>
<path d="M593 172 C622 148 667 127 695 124 C702.5 123.2 707 126 708.8 132 C716 158 719.8 220 719 262 L650 220 Z" fill="#cccb88" stroke="#55503c" stroke-width="1.6"/>
<path d="M616 178 C642 161.5 667 152 682 151.6 C689 151.4 692.5 154 693.6 158.5 C698.5 178 700 205 699.5 234 L650 215 Z" fill="#e8b9a8" stroke="#55503c" stroke-width="1.5"/>
<!-- body -->
<path d="M462.0 155.4 C482.0 154.4 507.8 153.9 530.0 156.5 C552.2 159.1 576.2 165.0 595.0 171.0 C613.8 177.0 628.1 184.4 643.0 192.7 C657.9 201.0 672.6 210.1 684.4 221.0 C696.2 231.9 706.5 245.7 714.0 258.0 C721.5 270.3 725.8 280.5 729.5 295.0 C733.2 309.5 735.2 330.0 736.0 345.0 C736.8 360.0 736.0 371.7 734.5 385.0 C733.0 398.3 730.7 411.7 727.0 425.0 C723.3 438.3 717.6 452.7 712.4 465.0 C707.1 477.3 701.1 488.8 695.5 499.0 C689.9 509.2 685.8 517.8 679.0 526.0 C672.2 534.2 664.8 541.0 655.0 548.0 C645.2 555.0 632.5 563.0 620.0 568.0 C607.5 573.0 594.7 576.2 580.0 578.3 C565.3 580.4 547.2 580.6 532.0 580.6 C516.8 580.6 503.3 580.1 488.8 578.4 C474.3 576.7 459.0 573.9 445.0 570.5 C431.0 567.1 418.4 563.2 405.0 558.0 C391.6 552.8 378.1 548.4 364.4 539.0 C350.7 529.6 333.7 515.2 323.0 501.7 C312.3 488.2 305.5 471.1 300.0 458.0 C294.5 444.9 292.4 435.8 289.8 423.0 C287.2 410.2 285.1 394.8 284.6 381.5 C284.1 368.2 284.9 356.1 286.6 343.0 C288.3 329.9 292.3 314.5 295.0 303.0 C297.7 291.5 299.3 283.8 303.0 274.0 C306.7 264.2 311.2 254.4 317.0 244.0 C322.8 233.6 329.5 222.0 338.0 211.5 C346.5 201.0 356.0 189.2 368.0 181.0 C380.0 172.8 394.3 166.8 410.0 162.5 C425.7 158.2 442.0 156.4 462.0 155.4Z" fill="#e3e3ab" stroke="#55503c" stroke-width="1.7"/>
<clipPath id="bodyclip2"><path d="M462.0 155.4 C482.0 154.4 507.8 153.9 530.0 156.5 C552.2 159.1 576.2 165.0 595.0 171.0 C613.8 177.0 628.1 184.4 643.0 192.7 C657.9 201.0 672.6 210.1 684.4 221.0 C696.2 231.9 706.5 245.7 714.0 258.0 C721.5 270.3 725.8 280.5 729.5 295.0 C733.2 309.5 735.2 330.0 736.0 345.0 C736.8 360.0 736.0 371.7 734.5 385.0 C733.0 398.3 730.7 411.7 727.0 425.0 C723.3 438.3 717.6 452.7 712.4 465.0 C707.1 477.3 701.1 488.8 695.5 499.0 C689.9 509.2 685.8 517.8 679.0 526.0 C672.2 534.2 664.8 541.0 655.0 548.0 C645.2 555.0 632.5 563.0 620.0 568.0 C607.5 573.0 594.7 576.2 580.0 578.3 C565.3 580.4 547.2 580.6 532.0 580.6 C516.8 580.6 503.3 580.1 488.8 578.4 C474.3 576.7 459.0 573.9 445.0 570.5 C431.0 567.1 418.4 563.2 405.0 558.0 C391.6 552.8 378.1 548.4 364.4 539.0 C350.7 529.6 333.7 515.2 323.0 501.7 C312.3 488.2 305.5 471.1 300.0 458.0 C294.5 444.9 292.4 435.8 289.8 423.0 C287.2 410.2 285.1 394.8 284.6 381.5 C284.1 368.2 284.9 356.1 286.6 343.0 C288.3 329.9 292.3 314.5 295.0 303.0 C297.7 291.5 299.3 283.8 303.0 274.0 C306.7 264.2 311.2 254.4 317.0 244.0 C322.8 233.6 329.5 222.0 338.0 211.5 C346.5 201.0 356.0 189.2 368.0 181.0 C380.0 172.8 394.3 166.8 410.0 162.5 C425.7 158.2 442.0 156.4 462.0 155.4Z"/></clipPath>
<g clip-path="url(#bodyclip2)" fill="#a89b49">
<path d="M297.5 300 L381 350 C386 353 385 356 379 357 C350 360 310 363 280 365 Z"/>
<path d="M288 368 L396 408 C403 411 402 414 395 416 C360 427 320 438 290 447 Z"/>
<path d="M740 349 C700 356 665 365 642 372 C637 374 637 377 642 379 C670 391 705 405 735 418 Z"/>
<path d="M722.5 427.5 C680 428 635 432 606 436.5 C601 437.5 601 440 605 442 C635 460 670 485 697 502 Z"/>
</g>
<!-- paws -->
<rect x="-35.5" y="-34.5" width="71" height="69" rx="30" ry="30" transform="translate(445.5 488.3) rotate(10)" fill="#cdca87" stroke="#4d4b42" stroke-width="2.4"/>
<rect x="-36.3" y="-34.3" width="72.6" height="68.6" rx="30.5" ry="30.5" transform="translate(562.8 501) rotate(4)" fill="#cdca87" stroke="#4d4b42" stroke-width="2.4"/>
<!-- eyes -->
<circle cx="492.9" cy="244.2" r="15" fill="#5b5659"/>
<circle cx="492.9" cy="244.2" r="8" fill="#2b2729"/>
<circle cx="565.5" cy="256" r="15" fill="#5b5659"/>
<circle cx="565.5" cy="256" r="8" fill="#2b2729"/>
<!-- mouth -->
<path d="M476.9 271.6 C466 290 468 322 492 323.6 C510 324 521 305 523 288.4" fill="#e9e7cf" stroke="#4b4a42" stroke-width="2.3"/>
<path d="M523 288.4 C522 312 532 332 548 332.8 C566 333 577 312 573.8 286.7" fill="#e9e7cf" stroke="#4b4a42" stroke-width="2.3"/>
</g>
</g><rect x="1094.4" y="252" width="76.6" height="45.5" fill="rgb(255,0,124)" fill-opacity=".29"/></svg></div>
<div class="a" style="left:1052.6px;top:276.2px;width:15.6px;height:77.4px;background:#d9d9d9;border-radius:4px"></div>
<div class="a" style="left:1056.8px;top:276.2px;width:1px;height:77.4px;background:#d9d9d9"></div>
<div class="a" style="left:1053.6px;top:280.8px;width:12.4px;text-align:center;font-family:'DejaVu Sans','Liberation Sans',sans-serif;font-weight:bold;font-size:9px;line-height:12px;color:#111">L</div><div class="a" style="left:1053.6px;top:292.2px;width:12.4px;text-align:center;font-family:'DejaVu Sans','Liberation Sans',sans-serif;font-weight:bold;font-size:9px;line-height:12px;color:#111">a</div><div class="a" style="left:1053.6px;top:303.6px;width:12.4px;text-align:center;font-family:'DejaVu Sans','Liberation Sans',sans-serif;font-weight:bold;font-size:9px;line-height:12px;color:#111">y</div><div class="a" style="left:1053.6px;top:315.0px;width:12.4px;text-align:center;font-family:'DejaVu Sans','Liberation Sans',sans-serif;font-weight:bold;font-size:9px;line-height:12px;color:#111">e</div><div class="a" style="left:1053.6px;top:326.4px;width:12.4px;text-align:center;font-family:'DejaVu Sans','Liberation Sans',sans-serif;font-weight:bold;font-size:9px;line-height:12px;color:#111">r</div><div class="a" style="left:1053.6px;top:337.8px;width:12.4px;text-align:center;font-family:'DejaVu Sans','Liberation Sans',sans-serif;font-weight:bold;font-size:9px;line-height:12px;color:#111">s</div>
<!-- bottom tools -->
<svg class="a" style="left:37px;top:646.5px" width="18" height="17" viewBox="0 0 18 17"><path d="M10.4 10.6 L15 15" stroke="#777" stroke-width="2.2" stroke-linecap="round"/><circle cx="6.8" cy="6.8" r="5" fill="#a9c9fb" stroke="#6a8fd0" stroke-width="1.1"/></svg>
<div class="inp" style="left:61px;top:644.6px;width:46.6px;height:19.2px;font-size:13.4px"><span style="left:3.4px;top:2.4px;transform:scaleX(.875);transform-origin:0 0">237.0</span><div class="a" style="left:29px;top:1.4px;width:16.6px;height:16.6px;background:#fff"></div></div><svg class="a" style="left:94.5px;top:646.7px" width="10" height="14" viewBox="0 0 10 14"><path d="M1.5 6.3 L5 2.1 L8.5 6.3 M1.5 7.7 L5 11.9 L8.5 7.7" fill="none" stroke="#1c1c1c" stroke-width="1.8"/></svg>
<div class="dd" style="left:110px;top:646.2px;width:12.6px;height:17.8px"></div>
<div class="sep" style="left:127px;top:645px;height:22px"></div>
<div class="a" style="left:130px;top:644px;width:46px;height:23px;background:#ebebeb;border-radius:3px"></div>
<svg class="a" style="left:134px;top:646px" width="17" height="18" viewBox="0 0 17 18"><path d="M1.6 8.6 L7 3.2 L12.4 8.6 L7 14Z" fill="#cfcfcf" stroke="#777" stroke-width="1.1" stroke-linejoin="round"/><path d="M7 2.4 V8.2" stroke="#777" stroke-width="1"/><circle cx="7" cy="2.6" r="1.1" fill="none" stroke="#777" stroke-width=".8"/><circle cx="7" cy="8.2" r=".9" fill="#666"/><path d="M11.6 7.8 C13.8 8.2 14.6 9.4 14.6 11 V15.4 H12.9 V11.4 C12.9 10.2 12.4 9.6 11.2 9.4Z" fill="#8c8c8c"/></svg>
<div class="a" style="left:156px;top:647.2px;width:15.1px;height:14.8px;background:#fa0000;box-shadow:inset 0 0 0 .6px #c22"></div>
<div class="a" style="left:182.5px;top:644px;width:114px;height:23px;background:#ebebeb;border-radius:3px"></div>
<div class="a" style="left:188.5px;top:648px;width:13.5px;height:13.5px;background:#7e7e7e"></div><div class="a" style="left:191.8px;top:651.3px;width:6.9px;height:6.9px;background:#efefef"></div>
<div class="a" style="left:208.3px;top:647.4px;width:15.4px;height:14.8px;background:#000"></div>
<div class="inp" style="left:229.4px;top:645.2px;width:47.6px;height:19px"></div><svg class="a" style="left:264.3px;top:647.8px" width="10" height="14" viewBox="0 0 10 14"><path d="M1.5 6.3 L5 2.1 L8.5 6.3 M1.5 7.7 L5 11.9 L8.5 7.7" fill="none" stroke="#1c1c1c" stroke-width="1.8"/></svg>
<div class="a" style="left:281.6px;top:649.4px;font-size:10.5px;font-weight:bold;line-height:13px;letter-spacing:-1.8px;color:#5a5a5a">&gt;&gt;</div>
<div class="a" style="left:298.4px;top:644px;width:95px;height:23px;background:#ebebeb;border-radius:3px"></div>
<svg class="a" style="left:302.3px;top:646.8px" width="16" height="16" viewBox="0 0 16 16"><defs><linearGradient id="go" x1="1" y1="0" x2="0" y2="1"><stop offset="0" stop-color="#ffffff"/><stop offset=".3" stop-color="#a8a8a8"/><stop offset=".6" stop-color="#444"/><stop offset="1" stop-color="#000"/></linearGradient></defs><rect x="0" y="0" width="15.8" height="15.8" fill="url(#go)"/><rect x="0" y="0" width="7.9" height="7.9" fill="#000" fill-opacity=".5"/><rect x="7.9" y="7.9" width="7.9" height="7.9" fill="#000" fill-opacity=".35"/></svg>
<div class="inp" style="left:322.6px;top:645.2px;width:46.7px;height:19px;font-size:12.3px"><span style="left:4.2px;top:2.9px;transform:scaleX(.9);transform-origin:0 0">100</span></div><svg class="a" style="left:356px;top:647.8px" width="10" height="14" viewBox="0 0 10 14"><path d="M1.5 6.3 L5 2.1 L8.5 6.3 M1.5 7.7 L5 11.9 L8.5 7.7" fill="none" stroke="#1c1c1c" stroke-width="1.8"/></svg>
<div class="dd" style="left:377px;top:646.8px;width:11.6px;height:17.6px"></div>
<div class="a" style="left:622.5px;top:644.5px;width:563.5px;height:21.8px;background:#e6e6e6;border-radius:3px"></div>
<svg class="a" style="left:0;top:640px" width="1200" height="35" viewBox="0 640 1200 35"><rect x="626.9" y="648.7" width="13.2" height="12.9" fill="#f4f4f4"/><path d="M627.5 649.3 L639.5 661 M639.5 649.3 L627.5 661" stroke="#c66" stroke-width=".7"/><rect x="640.10" y="648.7" width="13.25" height="12.9" fill="#000000"/><rect x="653.30" y="648.7" width="13.25" height="12.9" fill="#3f3f3f"/><rect x="666.50" y="648.7" width="13.25" height="12.9" fill="#7f7f7f"/><rect x="679.70" y="648.7" width="13.25" height="12.9" fill="#bfbfbf"/><rect x="692.90" y="648.7" width="13.25" height="12.9" fill="#ffffff"/><rect x="706.10" y="648.7" width="13.25" height="12.9" fill="#ff0000"/><rect x="719.30" y="648.7" width="13.25" height="12.9" fill="#ff7f00"/><rect x="732.50" y="648.7" width="13.25" height="12.9" fill="#ffff00"/><rect x="745.70" y="648.7" width="13.25" height="12.9" fill="#7fff00"/><rect x="758.90" y="648.7" width="13.25" height="12.9" fill="#00ff00"/><rect x="772.10" y="648.7" width="13.25" height="12.9" fill="#00ff7f"/><rect x="785.30" y="648.7" width="13.25" height="12.9" fill="#00ffff"/><rect x="798.50" y="648.7" width="13.25" height="12.9" fill="#007fff"/><rect x="811.70" y="648.7" width="13.25" height="12.9" fill="#0000ff"/><rect x="824.90" y="648.7" width="13.25" height="12.9" fill="#7f00ff"/><rect x="838.10" y="648.7" width="13.25" height="12.9" fill="#ff00ff"/><rect x="851.30" y="648.7" width="13.25" height="12.9" fill="#ff007f"/><rect x="864.50" y="648.7" width="13.25" height="12.9" fill="#7f0000"/><rect x="877.70" y="648.7" width="13.25" height="12.9" fill="#7f3f00"/><rect x="890.90" y="648.7" width="13.25" height="12.9" fill="#7f7f00"/><rect x="904.10" y="648.7" width="13.25" height="12.9" fill="#3f7f00"/><rect x="917.30" y="648.7" width="13.25" height="12.9" fill="#007f00"/><rect x="930.50" y="648.7" width="13.25" height="12.9" fill="#007f3f"/><rect x="943.70" y="648.7" width="13.25" height="12.9" fill="#007f7f"/><rect x="956.90" y="648.7" width="13.25" height="12.9" fill="#003f7f"/><rect x="970.10" y="648.7" width="13.25" height="12.9" fill="#00007f"/><rect x="983.30" y="648.7" width="13.25" height="12.9" fill="#3f007f"/><rect x="996.50" y="648.7" width="13.25" height="12.9" fill="#7f007f"/><rect x="1009.70" y="648.7" width="13.25" height="12.9" fill="#7f003f"/><rect x="1022.90" y="648.7" width="13.25" height="12.9" fill="#ffaaaa"/><rect x="1036.10" y="648.7" width="13.25" height="12.9" fill="#ffd4aa"/><rect x="1049.30" y="648.7" width="13.25" height="12.9" fill="#ffffaa"/><rect x="1062.50" y="648.7" width="13.25" height="12.9" fill="#d4ffaa"/><rect x="1075.70" y="648.7" width="13.25" height="12.9" fill="#aaffaa"/><rect x="1088.90" y="648.7" width="13.25" height="12.9" fill="#aaffd4"/><rect x="1102.10" y="648.7" width="13.25" height="12.9" fill="#aaffff"/><rect x="1115.30" y="648.7" width="13.25" height="12.9" fill="#aad4ff"/><rect x="1128.50" y="648.7" width="13.25" height="12.9" fill="#aaaaff"/><rect x="1141.70" y="648.7" width="13.25" height="12.9" fill="#d4aaff"/><rect x="1154.90" y="648.7" width="13.25" height="12.9" fill="#ffaaff"/><rect x="1168.10" y="648.7" width="13.25" height="12.9" fill="#ffaad4"/></svg>
</body></html>
